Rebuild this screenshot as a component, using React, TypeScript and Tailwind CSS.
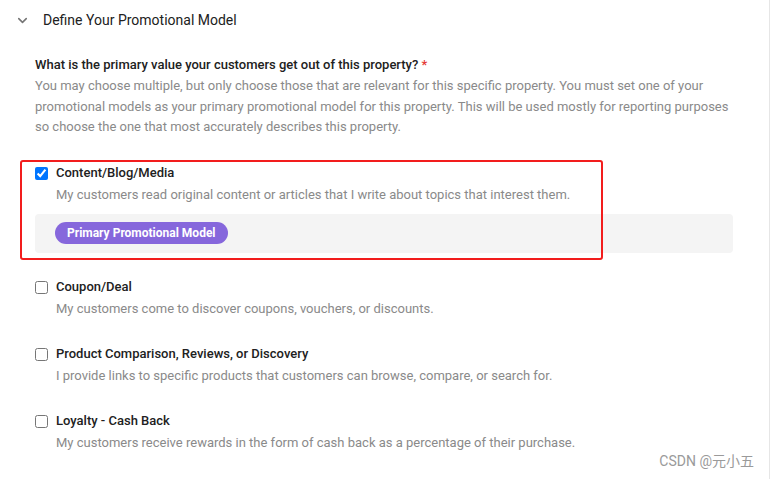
import { ChevronDown } from "lucide-react";

type Model = {
  id: string;
  label: string;
  description: string;
  checked?: boolean;
  primary?: boolean;
};

const models: Model[] = [
  {
    id: "content",
    label: "Content/Blog/Media",
    description: "My customers read original content or articles that I write about topics that interest them.",
    checked: true,
    primary: true,
  },
  {
    id: "coupon",
    label: "Coupon/Deal",
    description: "My customers come to discover coupons, vouchers, or discounts.",
  },
  {
    id: "comparison",
    label: "Product Comparison, Reviews, or Discovery",
    description: "I provide links to specific products that customers can browse, compare, or search for.",
  },
  {
    id: "loyalty",
    label: "Loyalty - Cash Back",
    description: "My customers receive rewards in the form of cash back as a percentage of their purchase.",
  },
];

function ModelOption({ model }: { model: Model }) {
  return (
    <div className={model.primary ? "mb-[24px]" : "mb-[25px]"}>
      <label className="flex items-start">
        <input
          type="checkbox"
          defaultChecked={model.checked}
          className="mt-[4px] ml-0 mr-[8px] h-[13px] w-[13px] shrink-0"
        />
        <div>
          <div className="text-[13px] leading-[20px] text-[#212121] font-medium">{model.label}</div>
          <div className="mt-[2px] text-[13px] leading-[20px] text-[#8a8a8a]">{model.description}</div>
        </div>
      </label>
      {model.primary && (
        <div className="mt-[9px] flex h-[39px] w-[698px] items-center rounded-[4px] bg-[#f4f4f4] pl-[20px]">
          <span className="flex h-[22px] items-center rounded-full bg-[#8667dc] px-[12px] text-[12px] font-bold text-white">
            Primary Promotional Model
          </span>
        </div>
      )}
    </div>
  );
}

export default function App() {
  return (
    <div
      className="relative h-[479px] w-[770px] overflow-hidden border-r border-[#e6e6e6] bg-white"
      style={{ fontFamily: "Roboto, 'Noto Sans CJK SC', sans-serif" }}
    >
      {/* section header */}
      <div className="flex h-[40px] items-center pl-[15px]">
        <ChevronDown className="h-[15px] w-[15px] text-[#757575]" strokeWidth={2.5} />
        <span className="ml-[13px] text-[14px] leading-[20px] text-[#212121]">Define Your Promotional Model</span>
      </div>

      <div className="mt-[15px] pl-[35px]">
        <div className="text-[13px] leading-[20px] font-medium text-[#212121]">
          What is the primary value your customers get out of this property? <span className="text-[#e53935]">*</span>
        </div>
        <p className="mt-[1px] w-[705px] text-[13px] leading-[20.5px] text-[#8a8a8a]">
          You may choose multiple, but only choose those that are relevant for this specific property. You must set one of your
          promotional models as your primary promotional model for this property. This will be used mostly for reporting purposes
          so choose the one that most accurately describes this property.
        </p>

        <div className="mt-[25px]">
          {models.map((m) => (
            <ModelOption key={m.id} model={m} />
          ))}
        </div>
      </div>

      {/* annotation box */}
      <div className="absolute left-[20px] top-[160px] h-[100px] w-[583px] rounded-[3px] border-2 border-[#f21d1d] pointer-events-none" />

      {/* watermark */}
      <div className="absolute right-[15px] bottom-[7px] text-[14px] text-[#9a9a9a]">CSDN @元小五</div>
    </div>
  );
}
